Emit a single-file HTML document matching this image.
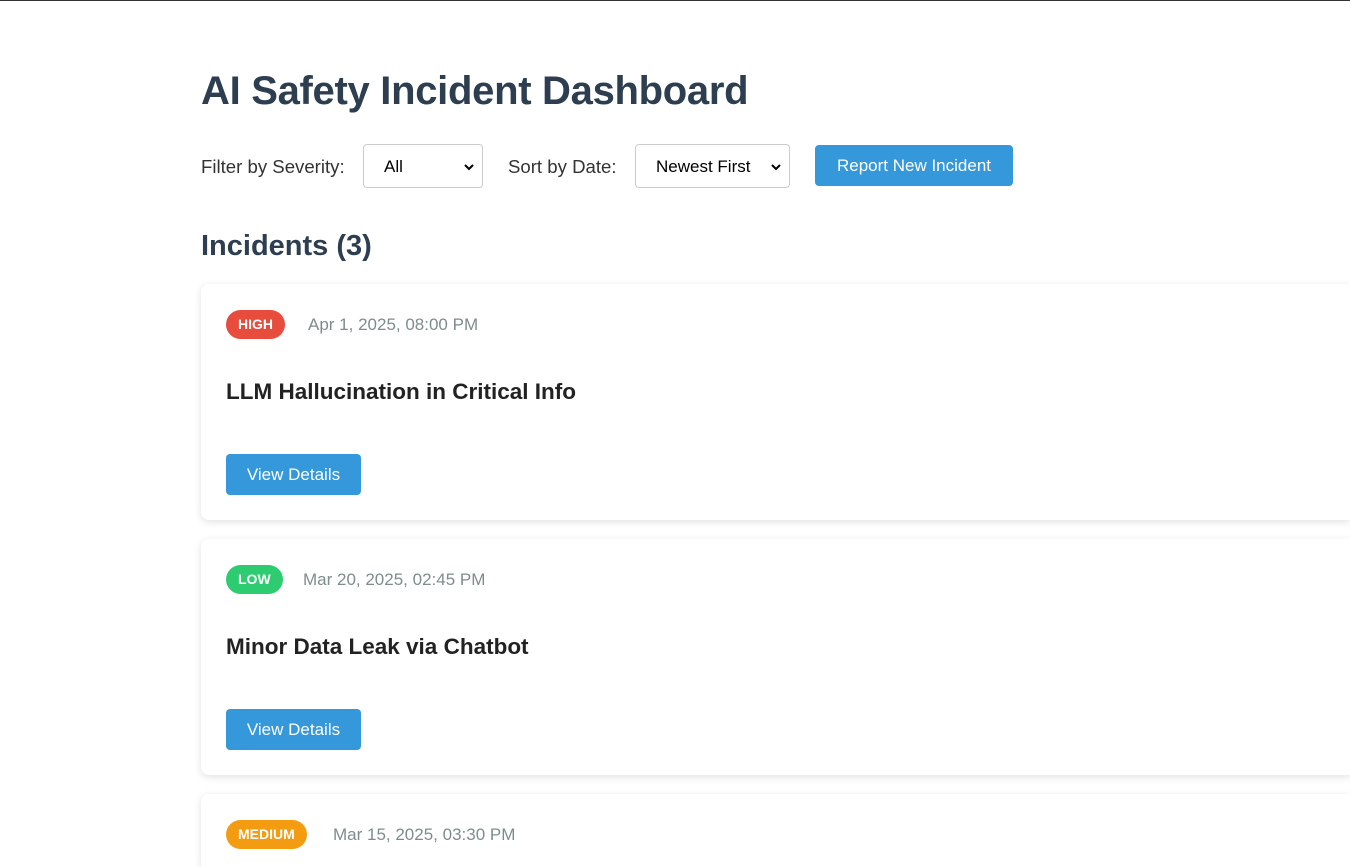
<!DOCTYPE html>
<html><head><meta charset="utf-8"><style>
*{box-sizing:border-box;margin:0;padding:0}
html,body{width:1350px;height:867px;overflow:hidden}
body{background:#fff;font-family:"Liberation Sans",sans-serif;position:relative;border-top:1px solid #333}
.a{position:absolute}
h1{position:absolute;left:201px;top:68px;font-size:40px;font-weight:bold;color:#2c3e50;letter-spacing:-0.3px}
.lbl{font-size:18.6px;color:#333;top:155px}
.sel{border:1px solid #ccc;border-radius:4px;height:44px;top:143px;font-size:17px;color:#000;padding:12px 0 0 20px}
.sel svg{position:absolute;right:8px;top:19px}
.btn{background:#3498db;color:#fff;border-radius:4px;font-size:17px;text-align:center}
h2{position:absolute;left:201px;top:229px;font-size:29px;font-weight:bold;color:#2c3e50}
.card{position:absolute;left:201px;width:1149px;height:236px;border-radius:8px 0 0 8px;box-shadow:0 2px 8px rgba(0,0,0,0.12);background:#fff}
.badge{position:absolute;left:25px;top:26px;height:29px;border-radius:15px;color:#fff;font-size:14px;font-weight:bold;line-height:29px;padding:0 12px}
.date{position:absolute;top:31px;font-size:17px;color:#7f8c8d}
.title{position:absolute;left:25px;top:95px;font-size:22.5px;font-weight:bold;color:#222}
.vd{position:absolute;left:25px;top:170px;width:135px;height:41px;line-height:41px}
</style></head><body>
<h1>AI Safety Incident Dashboard</h1>
<div class="a lbl" style="left:201px">Filter by Severity:</div>
<div class="a sel" style="left:363px;width:120px">All<svg width="10" height="7" viewBox="0 0 10 7"><path d="M1 1l4 4 4-4" stroke="#000" stroke-width="2" fill="none"/></svg></div>
<div class="a lbl" style="left:508px">Sort by Date:</div>
<div class="a sel" style="left:635px;width:155px">Newest First<svg width="10" height="7" viewBox="0 0 10 7"><path d="M1 1l4 4 4-4" stroke="#000" stroke-width="2" fill="none"/></svg></div>
<div class="a btn" style="left:815px;top:144px;width:198px;height:41px;line-height:41px">Report New Incident</div>
<h2>Incidents (3)</h2>
<div class="card" style="top:283px"><div class="badge" style="background:#e74c3c">HIGH</div><div class="date" style="left:107px">Apr 1, 2025, 08:00 PM</div><div class="title">LLM Hallucination in Critical Info</div><div class="btn vd">View Details</div></div>
<div class="card" style="top:538px"><div class="badge" style="background:#2ecc71">LOW</div><div class="date" style="left:102px">Mar 20, 2025, 02:45 PM</div><div class="title">Minor Data Leak via Chatbot</div><div class="btn vd">View Details</div></div>
<div class="card" style="top:793px;height:74px;border-radius:8px 0 0 0"><div class="badge" style="background:#f39c12">MEDIUM</div><div class="date" style="left:132px">Mar 15, 2025, 03:30 PM</div></div>
</body></html>
